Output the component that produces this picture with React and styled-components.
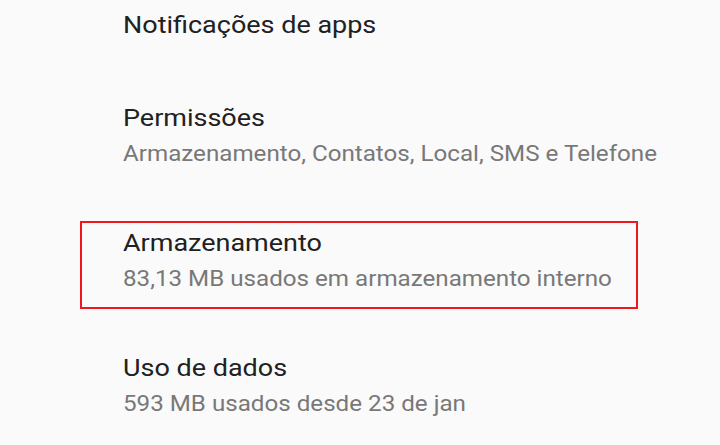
import React from "react";
import styled, { createGlobalStyle } from "styled-components";

const GlobalStyle = createGlobalStyle`
  html, body {
    margin: 0;
    padding: 0;
    background: #fafafa;
  }
  body {
    font-family: Roboto, "Noto Sans", sans-serif;
    -webkit-font-smoothing: antialiased;
  }
`;

const Screen = styled.div`
  width: 720px;
  height: 445px;
  overflow: hidden;
  background: #fafafa;
`;

const List = styled.div`
  display: flex;
  flex-direction: column;
  margin-top: -20px;
`;

const Row = styled.div`
  position: relative;
  display: flex;
  flex-direction: column;
  align-items: flex-start;
  padding: 29px 20px ${(props) => (props.single ? "32px" : "29px")} 123px;

  ${(props) =>
    props.highlighted &&
    `
    &::after {
      content: "";
      position: absolute;
      left: 80px;
      top: 23px;
      width: 554px;
      height: 84px;
      border: 2px solid #f01820;
      pointer-events: none;
    }
  `}
`;

/* the source screenshot is a little stretched sideways */
const Title = styled.div`
  font-size: 24px;
  line-height: 32px;
  color: #212121;
  white-space: nowrap;
  transform: scaleX(1.124);
  transform-origin: left center;
`;

const Summary = styled.div`
  margin-top: 5px;
  font-size: 21.5px;
  line-height: 30px;
  color: #787878;
  white-space: nowrap;
  transform: scaleX(1.124);
  transform-origin: left center;
`;

const items = [
  { title: "Notificações de apps" },
  {
    title: "Permissões",
    summary: "Armazenamento, Contatos, Local, SMS e Telefone",
  },
  {
    title: "Armazenamento",
    summary: "83,13 MB usados em armazenamento interno",
    highlighted: true,
  },
  { title: "Uso de dados", summary: "593 MB usados desde 23 de jan" },
];

export default function App() {
  return (
    <Screen>
      <GlobalStyle />
      <List>
        {items.map((item) => (
          <Row
            key={item.title}
            single={!item.summary}
            highlighted={item.highlighted}
          >
            <Title>{item.title}</Title>
            {item.summary && <Summary>{item.summary}</Summary>}
          </Row>
        ))}
      </List>
    </Screen>
  );
}
